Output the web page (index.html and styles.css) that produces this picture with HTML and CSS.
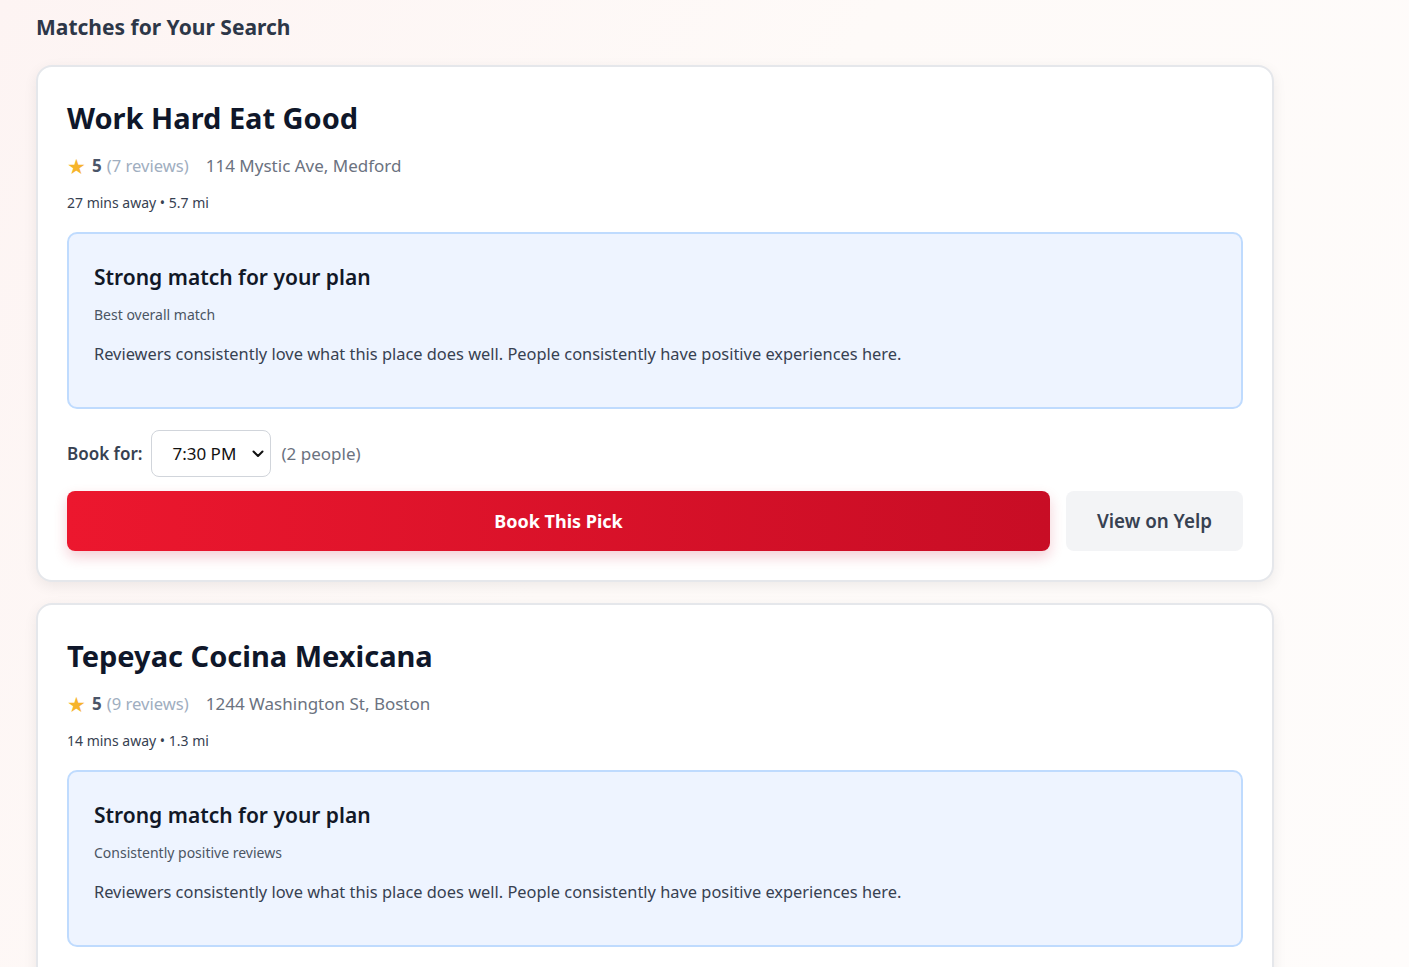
FILE: index.html
```html
<!DOCTYPE html>
<html lang="en">
<head>
<meta charset="utf-8">
<title>Matches for Your Search</title>
<link rel="stylesheet" href="styles.css">
</head>
<body>
<main class="page">
  <h2 class="page-title">Matches for Your Search</h2>

  <section class="card">
    <h3 class="name">Work Hard Eat Good</h3>
    <div class="meta">
      <span class="star">★</span>
      <span class="score">5</span>
      <span class="reviews">(7 reviews)</span>
      <span class="address">114 Mystic Ave, Medford</span>
    </div>
    <div class="distance">27 mins away • 5.7 mi</div>
    <div class="why">
      <h4 class="why-title">Strong match for your plan</h4>
      <div class="why-sub">Best overall match</div>
      <p class="why-text">Reviewers consistently love what this place does well. People consistently have positive experiences here.</p>
    </div>
    <div class="book-row">
      <label class="book-label">Book for:</label>
      <div class="select">
        <span>7:30 PM</span>
        <svg class="chev" width="12" height="8" viewBox="0 0 12 8"><path d="M1.5 1.5 6 6l4.5-4.5" fill="none" stroke="#111" stroke-width="2" stroke-linecap="round" stroke-linejoin="round"/></svg>
      </div>
      <span class="people">(2 people)</span>
    </div>
    <div class="actions">
      <button class="btn-primary">Book This Pick</button>
      <button class="btn-secondary">View on Yelp</button>
    </div>
  </section>

  <section class="card">
    <h3 class="name">Tepeyac Cocina Mexicana</h3>
    <div class="meta">
      <span class="star">★</span>
      <span class="score">5</span>
      <span class="reviews">(9 reviews)</span>
      <span class="address">1244 Washington St, Boston</span>
    </div>
    <div class="distance">14 mins away • 1.3 mi</div>
    <div class="why">
      <h4 class="why-title">Strong match for your plan</h4>
      <div class="why-sub">Consistently positive reviews</div>
      <p class="why-text">Reviewers consistently love what this place does well. People consistently have positive experiences here.</p>
    </div>
    <div class="book-row">
      <label class="book-label">Book for:</label>
      <div class="select">
        <span>7:30 PM</span>
        <svg class="chev" width="12" height="8" viewBox="0 0 12 8"><path d="M1.5 1.5 6 6l4.5-4.5" fill="none" stroke="#111" stroke-width="2" stroke-linecap="round" stroke-linejoin="round"/></svg>
      </div>
      <span class="people">(2 people)</span>
    </div>
    <div class="actions">
      <button class="btn-primary">Book This Pick</button>
      <button class="btn-secondary">View on Yelp</button>
    </div>
  </section>
</main>
</body>
</html>
```

FILE: styles.css
```css
* { box-sizing: border-box; }
html, body { margin: 0; padding: 0; }
html { background: #fefcfb; }
body {
  font-family: "Noto Sans", "Open Sans", sans-serif;
  background: linear-gradient(120deg, #fdf4f3 0%, #fefaf8 45%, #fefcfb 100%);
  height: 967px;
  overflow: hidden;
  color: #1f2937;
}
.page {
  width: 1238px;
  margin-left: 36px;
  padding-top: 11px;
}
.page-title {
  margin: 0 0 22px;
  font-size: 21px;
  line-height: 32px;
  font-weight: 700;
  color: #2d3748;
}
.card {
  background: #fff;
  border: 2px solid #e5e7eb;
  border-radius: 16px;
  padding: 29px 29px 29px;
  box-shadow: 0 4px 14px rgba(0,0,0,0.07);
  margin-bottom: 21px;
}
.name {
  margin: 0;
  font-size: 29px;
  line-height: 44px;
  font-weight: 700;
  color: #0f172a;
}
.meta {
  margin-top: 14px;
  display: flex;
  align-items: center;
  font-size: 17px;
  line-height: 24px;
}
.star { color: #f6b42c; margin-right: 6px; font-size: 21px; line-height: 24px; }
.score { font-weight: 700; color: #4a5568; margin-right: 5px; }
.reviews { color: #a0aec0; margin-right: 17px; font-size: 16.6px; }
.address { color: #6b7280; }
.distance {
  margin-top: 15px;
  font-size: 14px;
  line-height: 20px;
  color: #374151;
}
.why {
  margin-top: 19px;
  background: #eef4ff;
  border: 2px solid #bfdbfe;
  border-radius: 10px;
  padding: 27px 25px 41px;
}
.why-title {
  margin: 0;
  font-size: 21px;
  line-height: 32px;
  font-weight: 600;
  color: #111827;
}
.why-sub {
  margin-top: 12px;
  font-size: 14px;
  line-height: 20px;
  color: #4b5563;
}
.why-text {
  margin: 17px 0 0;
  font-size: 16.4px;
  line-height: 24px;
  color: #374151;
}
.book-row {
  margin-top: 21px;
  display: flex;
  align-items: center;
  gap: 10px;
  font-size: 17px;
}
.book-label { font-weight: 600; color: #374151; margin-right: -1px; }
.select {
  width: 120px;
  height: 47px;
  border: 1px solid #d1d5db;
  border-radius: 8px;
  display: flex;
  align-items: center;
  justify-content: space-between;
  padding: 0 6px 0 20px;
  color: #111;
  background: #fff;
}
.people { color: #6b7280; }
.actions {
  margin-top: 14px;
  display: flex;
  gap: 16px;
}
.btn-primary {
  flex: 1;
  height: 60px;
  border: none;
  border-radius: 8px;
  background: linear-gradient(90deg, #ec172e 0%, #c80d25 100%);
  color: #fff;
  font-family: inherit;
  font-size: 18px;
  font-weight: 700;
  box-shadow: 0 6px 14px rgba(200, 16, 46, 0.2);
}
.btn-secondary {
  width: 177px;
  height: 60px;
  border: none;
  border-radius: 8px;
  background: #f3f4f6;
  color: #374151;
  font-family: inherit;
  font-size: 18.8px;
  font-weight: 600;
}
```
